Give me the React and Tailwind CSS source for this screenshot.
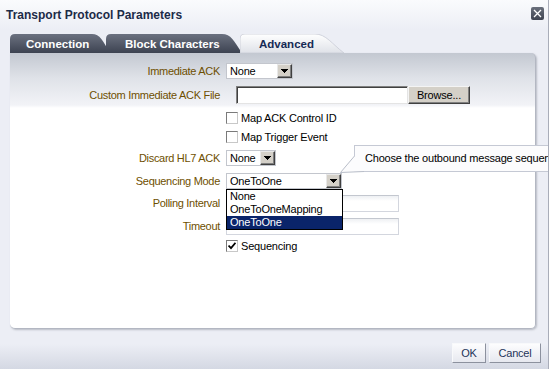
import React from "react";

const FONT = { fontFamily: '"Liberation Sans", Arial, sans-serif' };

function Arrow() {
  return (
    <svg width="7" height="4" viewBox="0 0 7 4" shapeRendering="crispEdges">
      <rect x="0" y="0" width="7" height="1" fill="#000" />
      <rect x="1" y="1" width="5" height="1" fill="#000" />
      <rect x="2" y="2" width="3" height="1" fill="#000" />
      <rect x="3" y="3" width="1" height="1" fill="#000" />
    </svg>
  );
}

function DropBtn() {
  return (
    <div className="w-[15px] h-full bg-[#d4d0c8] border border-t-[#e8e8e8] border-l-[#e8e8e8] border-r-[#404040] border-b-[#404040] shadow-[inset_-1px_-1px_0_#808080] flex items-center justify-center">
      <Arrow />
    </div>
  );
}

function Select({ className, value }) {
  return (
    <div className={"flex h-[16px] bg-white border border-[#c3c6cd] " + className}>
      <div className="flex-1 pl-[3px] text-black text-[11px] leading-[14px] tracking-[-0.2px]">{value}</div>
      <DropBtn />
    </div>
  );
}

function Checkbox({ checked }) {
  return (
    <div className="w-[12px] h-[12px] bg-white border border-t-[#7a7a7a] border-l-[#7a7a7a] border-r-[#c8c8c8] border-b-[#c8c8c8] flex items-center justify-center">
      {checked && (
        <svg width="8" height="8" viewBox="0 0 8 8">
          <path d="M0.5 3.5 L3 6.2 L7.5 0.8" stroke="#000" strokeWidth="1.8" fill="none" />
        </svg>
      )}
    </div>
  );
}

function Label({ children }) {
  return (
    <div className="w-[216px] shrink-0 text-right text-[#6e4f00] text-[11px] tracking-[-0.3px] pr-[6px]">{children}</div>
  );
}

export default function App() {
  return (
    <div
      style={FONT}
      className="w-[549px] h-[369px] flex flex-col bg-[#eceef5] border-r border-[#a9adb9] overflow-hidden relative bg-[linear-gradient(to_bottom,#fafbfd_0px,#eceef5_30px,#eceef5_344px,#d4d8e3_369px)]"
    >
      {/* Title bar */}
      <div className="h-[30px] flex items-start justify-between pl-[6px] pr-[4px] shrink-0">
        <div className="mt-[7px] text-[12px] font-bold text-[#1c2b48] leading-[16px]">Transport Protocol Parameters</div>
        <div className="mt-[7px] w-[13px] h-[13px] rounded-[2px] bg-[linear-gradient(to_bottom,#6a707c,#3f4451)] flex items-center justify-center">
          <svg width="9" height="9" viewBox="0 0 9 9">
            <path d="M1 1 L8 8 M8 1 L1 8" stroke="#fff" strokeWidth="1.3" />
          </svg>
        </div>
      </div>

      {/* Tabs */}
      <div className="mt-[4px] h-[19px] pl-[10px] flex shrink-0">
        <div className="relative w-[100px] h-[19px] z-[3]">
          <svg className="absolute inset-0" width="100" height="19" viewBox="0 0 100 19">
            <defs>
              <linearGradient id="dk" x1="0" y1="0" x2="0" y2="1">
                <stop offset="0" stopColor="#6b7180" />
                <stop offset="1" stopColor="#3d4351" />
              </linearGradient>
            </defs>
            <path d="M0 19 V5 Q0 0 5 0 H82 C90 0 93 7 100 19 Z" fill="url(#dk)" />
          </svg>
          <div className="relative pl-[16px] pt-[3px] text-[11.5px] font-bold text-white leading-[14px]">Connection</div>
        </div>
        <div className="relative ml-[-4px] w-[136px] h-[19px] z-[2]">
          <svg className="absolute inset-0" width="136" height="19" viewBox="0 0 136 19">
            <defs>
              <linearGradient id="dk2" x1="0" y1="0" x2="0" y2="1">
                <stop offset="0" stopColor="#6b7180" />
                <stop offset="1" stopColor="#3d4351" />
              </linearGradient>
            </defs>
            <path d="M0 19 V5 Q0 0 5 0 H116 C125 0 128 7 136 19 Z" fill="url(#dk2)" />
          </svg>
          <div className="relative pl-[19px] pt-[3px] text-[11.5px] font-bold text-white leading-[14px]">Block Characters</div>
        </div>
        <div className="relative ml-[-2px] w-[104px] h-[19px] z-[4]">
          <svg className="absolute inset-0" width="104" height="19" viewBox="0 0 104 19">
            <defs>
              <linearGradient id="lt" x1="0" y1="0" x2="0" y2="1">
                <stop offset="0" stopColor="#ffffff" />
                <stop offset="1" stopColor="#dfe2e8" />
              </linearGradient>
            </defs>
            <path d="M0 19 V5 Q0 0 5 0 H75 C86 0 92 10 104 19 Z" fill="url(#lt)" stroke="#c9ccd5" strokeWidth="0.8" />
          </svg>
          <div className="relative pl-[19px] pt-[3px] text-[11.5px] font-bold text-[#162a55] leading-[14px]">Advanced</div>
        </div>
      </div>

      {/* Panel */}
      <div className="mx-[10px] w-[526px] h-[276px] shrink-0 rounded-tr-[5px] rounded-b-[5px] border-r border-b border-[#b3b7c2] shadow-[1px_1px_2px_rgba(90,95,110,0.35)] bg-[linear-gradient(to_bottom,#c3c8d1_0px,#dfe2e8_25px,#f2f3f7_52px,#ffffff_55px,#ffffff_100%)] pt-[9px] flex flex-col">
        {/* Immediate ACK */}
        <div className="h-[18px] flex items-center">
          <Label>Immediate ACK</Label>
          <Select className="w-[67px]" value="None" />
        </div>
        {/* Custom file */}
        <div className="mt-[6px] h-[18px] flex items-center">
          <Label>Custom Immediate ACK File</Label>
          <div className="ml-[10px] w-[172px] h-[18px] bg-white border border-t-[#808080] border-l-[#808080] border-r-[#e4e4e4] border-b-[#e4e4e4] shadow-[inset_1px_1px_0_#404040]" />
          <div className="w-[62px] h-[18px] bg-[#d4d0c8] border border-t-[#f4f4f4] border-l-[#f4f4f4] border-r-[#404040] border-b-[#404040] shadow-[inset_-1px_-1px_0_#808080] flex items-center justify-center text-[11px] text-black tracking-[-0.2px] leading-[14px]">
            Browse...
          </div>
        </div>
        {/* Map ACK Control ID */}
        <div className="mt-[5px] h-[18px] flex items-center">
          <div className="w-[216px] shrink-0" />
          <Checkbox />
          <div className="ml-[3px] text-[11px] text-black tracking-[-0.2px]">Map ACK Control ID</div>
        </div>
        {/* Map Trigger Event */}
        <div className="mt-[1px] h-[18px] flex items-center">
          <div className="w-[216px] shrink-0" />
          <Checkbox />
          <div className="ml-[3px] text-[11px] text-black tracking-[-0.2px]">Map Trigger Event</div>
        </div>
        {/* Discard HL7 ACK */}
        <div className="mt-[3px] h-[18px] flex items-center">
          <Label>Discard HL7 ACK</Label>
          <Select className="w-[50px]" value="None" />
        </div>
        {/* Sequencing Mode */}
        <div className="mt-[5px] h-[18px] flex items-center relative z-10">
          <Label>Sequencing Mode</Label>
          <div className="relative">
            <Select className="w-[116px]" value="OneToOne" />
            {/* open list */}
            <div className="absolute left-0 top-[16px] w-[117px] h-[41px] bg-white border border-black flex flex-col text-[11px] leading-[13px] tracking-[-0.2px]">
              <div className="h-[13px] pl-[3px] text-black">None</div>
              <div className="h-[13px] pl-[3px] text-black">OneToOneMapping</div>
              <div className="h-[13px] pl-[3px] text-white bg-[#0a246a]">OneToOne</div>
            </div>
            {/* tooltip */}
            <div className="absolute left-[128px] top-[-28px] w-[220px] h-[27px] bg-[#fcfcfd] border border-[#c5c9d4] pl-[10px] flex items-center text-[11px] text-black tracking-[-0.2px] whitespace-nowrap">
              Choose the outbound message sequencing mode
            </div>
            <svg className="absolute left-[113px] top-[-17px]" width="26" height="18" viewBox="0 0 26 18">
              <polygon points="15.5,0 1.5,16.5 25,15.5 25,0" fill="#fcfcfd" />
              <path d="M15.5 0 L1.5 16.5 L25 15.5" stroke="#b9bec9" strokeWidth="1" fill="none" />
            </svg>
          </div>
        </div>
        {/* Polling Interval */}
        <div className="mt-[4px] h-[18px] flex items-center">
          <Label>Polling Interval</Label>
          <div className="w-[173px] h-[17px] bg-[linear-gradient(to_bottom,#eef0f3,#ffffff_5px)] border border-[#d3d6de] border-t-[#c3c7cf]" />
        </div>
        {/* Timeout */}
        <div className="mt-[5px] h-[18px] flex items-center">
          <Label>Timeout</Label>
          <div className="w-[173px] h-[17px] bg-[linear-gradient(to_bottom,#eef0f3,#ffffff_5px)] border border-[#d3d6de] border-t-[#c3c7cf]" />
        </div>
        {/* Sequencing */}
        <div className="mt-[2px] h-[18px] flex items-center">
          <div className="w-[216px] shrink-0" />
          <Checkbox checked />
          <div className="ml-[3px] text-[11px] text-black tracking-[-0.2px]">Sequencing</div>
        </div>
      </div>

      {/* Footer */}
      <div className="flex justify-end pr-[7px] pt-[14px] gap-[3px]">
        <div className="w-[34px] h-[20px] bg-[linear-gradient(to_bottom,#fdfdfe,#e6e8ef)] border border-[#f8f9fb] border-r-[#8c919e] border-b-[#8c919e] flex items-center justify-center text-[11px] text-[#1e3459] tracking-[-0.2px]">
          OK
        </div>
        <div className="w-[52px] h-[20px] bg-[linear-gradient(to_bottom,#fdfdfe,#e6e8ef)] border border-[#f8f9fb] border-r-[#8c919e] border-b-[#8c919e] flex items-center justify-center text-[11px] text-[#1e3459] tracking-[-0.2px]">
          Cancel
        </div>
      </div>
    </div>
  );
}
